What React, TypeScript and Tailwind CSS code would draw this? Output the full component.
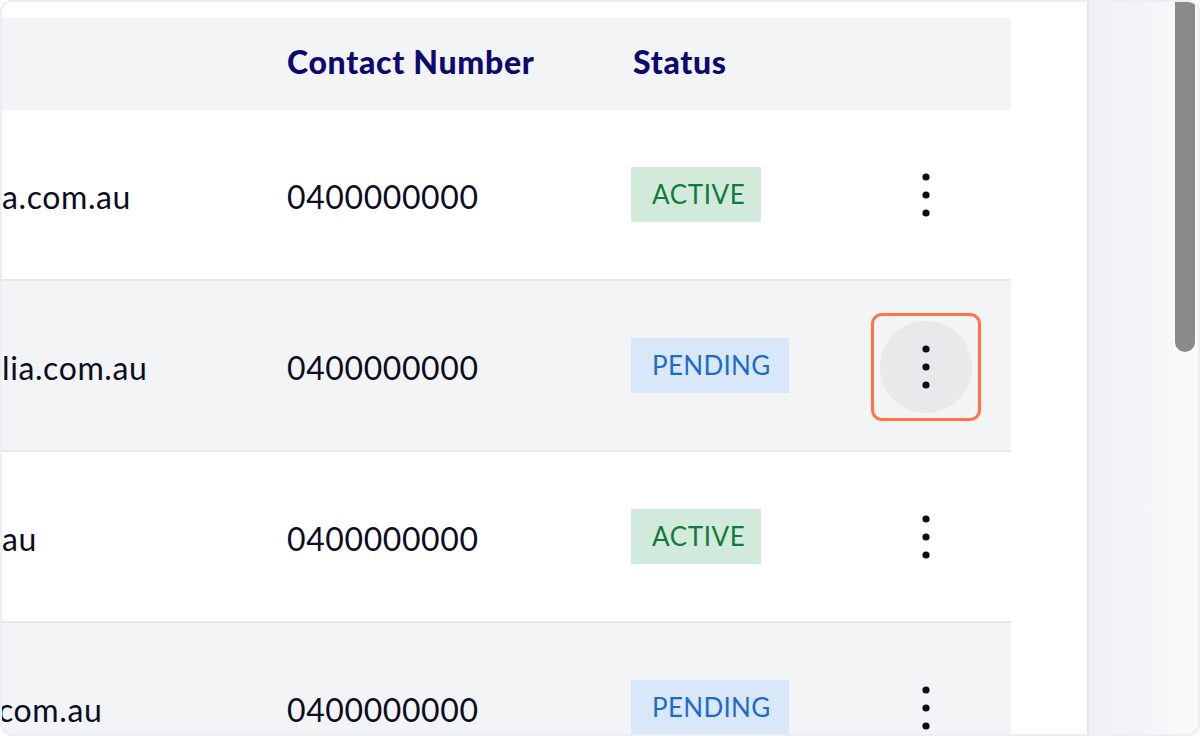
import React from 'react'

type Row = { email: string; phone: string; status: 'ACTIVE' | 'PENDING'; focused?: boolean; shift?: number }

const ROWS: Row[] = [
  { email: 'a.com.au', phone: '0400000000', status: 'ACTIVE' },
  { email: 'lia.com.au', phone: '0400000000', status: 'PENDING', focused: true },
  { email: 'au', phone: '0400000000', status: 'ACTIVE' },
  { email: 'com.au', phone: '0400000000', status: 'PENDING', shift: -4 },
]

const STATUS_STYLES: Record<string, string> = {
  ACTIVE: 'bg-[#d2eadc] text-[#137a3c] pr-[16px]',
  PENDING: 'bg-[#d9e8f8] text-[#1f6bcc] pr-[19px] tracking-[0.3px]',
}

function Kebab({ focused }: { focused?: boolean }) {
  const dots = (
    <svg width="10" height="46" viewBox="0 0 10 46" className="block">
      <circle cx="5" cy="5" r="3.6" fill="#0b0b1a" />
      <circle cx="5" cy="23" r="3.6" fill="#0b0b1a" />
      <circle cx="5" cy="41" r="3.6" fill="#0b0b1a" />
    </svg>
  )
  if (!focused) {
    return <div className="w-[92px] h-[92px] flex items-center justify-center">{dots}</div>
  }
  return (
    <div className="w-[92px] h-[92px] relative mt-[3px]">
      <div className="absolute -left-[9px] -top-[8px] w-[110px] h-[108px] rounded-[11px] border-[3px] border-[#ff7443]" />
      <div className="w-[92px] h-[92px] rounded-full bg-[#e8e9eb] flex items-center justify-center">{dots}</div>
    </div>
  )
}

export default function App() {
  return (
    <div className="w-[1200px] h-[736px] bg-white overflow-hidden" style={{ fontFamily: 'Lato, "Open Sans", sans-serif' }}>
      <div className="w-full h-full rounded-[12px] border-2 border-[#eceef3] overflow-hidden flex">
        {/* Table area */}
        <div className="w-[1085px] h-full bg-white pt-[16px] overflow-hidden">
          <div className="w-[1009px]">
            {/* Header */}
            <div className="h-[92px] bg-[#f3f4f6] flex items-center text-[32px] font-black text-[#0d0a6e] tracking-[0.7px] pb-[4px]">
              <div className="w-[285px]" />
              <div className="w-[346px]">Contact Number</div>
              <div>Status</div>
            </div>

            {/* Rows */}
            {ROWS.map((row, i) => (
              <div
                key={i}
                className={`h-[171px] flex items-center border-b-2 border-[#e6e7ea] text-[32px] tracking-[0.6px] text-[#0c0c22] ${i % 2 === 1 ? 'bg-[#f3f4f6]' : 'bg-white'}`}
              >
                <div className="w-[285px] overflow-hidden whitespace-nowrap pt-[4px]">
                  <span className="inline-block" style={{ marginLeft: row.shift ?? 0 }}>{row.email}</span>
                </div>
                <div className="w-[344px] pt-[4px]">{row.phone}</div>
                <div className="w-[249px]">
                  <span className={`inline-flex items-center h-[55px] pl-[21px] text-[26px] ${STATUS_STYLES[row.status]}`}>
                    {row.status}
                  </span>
                </div>
                <Kebab focused={row.focused} />
              </div>
            ))}
          </div>
        </div>

        {/* Right gutter with scrollbar */}
        <div className="flex-1 h-full border-l-2 border-[#e4e6ec] bg-gradient-to-r from-[#eef0f6] to-[#fafafa] flex justify-end pr-[3px]">
          <div className="w-[20px] h-[350px] bg-[#8a8a8a] rounded-b-full" />
        </div>
      </div>
    </div>
  )
}
